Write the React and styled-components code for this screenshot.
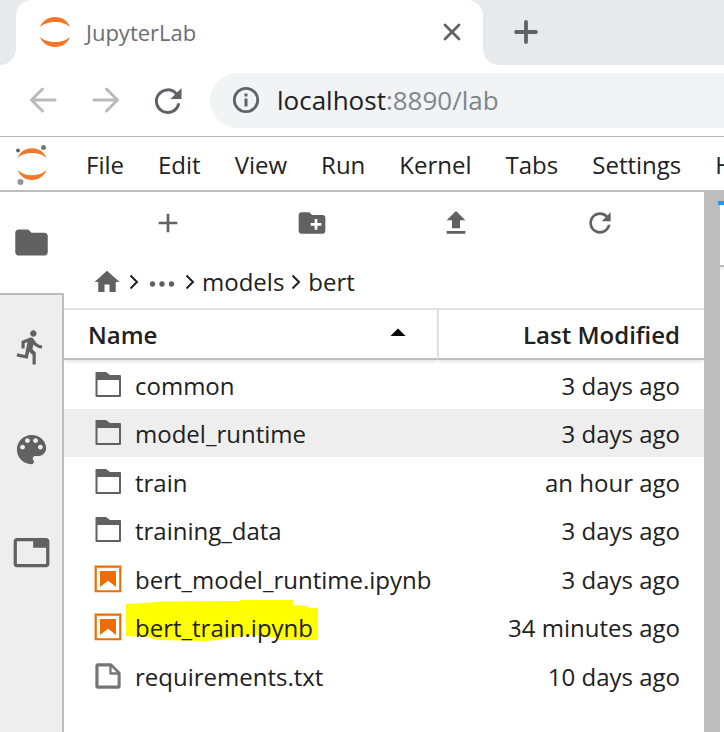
import React from "react";
import styled, { createGlobalStyle } from "styled-components";

const GlobalStyle = createGlobalStyle`
  *, *::before, *::after { box-sizing: border-box; }
  body { margin: 0; background: #fff; overflow: hidden; }
  button, input { font: inherit; color: inherit; border: 0; padding: 0; background: none; }
  a { color: inherit; text-decoration: none; }
  svg { display: block; flex: none; }
`;

const Page = styled.div`
  display: flex;
  flex-direction: column;
  height: 100vh;
  font-family: "Open Sans", "Noto Sans", sans-serif;
  font-size: 24px;
  line-height: 32px;
  color: #212121;
`;

const TabStrip = styled.header`
  display: flex;
  flex: none;
  height: 65px;
  background: #fff;
`;

const StripLead = styled.div`
  flex: none;
  width: 16px;
  background: #e6eaed;
  border-bottom-right-radius: 16px;
`;

const BrowserTab = styled.div`
  display: flex;
  align-items: center;
  flex: 0 1 467px;
  padding: 0 20px 2px 23px;
  gap: 15px;
  color: #6b6e72;
  font-size: 22px;
  background: linear-gradient(#e6eaed, #e6eaed) top / 100% 16px no-repeat;
  position: relative;
  isolation: isolate;
  &::before {
    content: "";
    position: absolute;
    inset: 0;
    z-index: -1;
    background: #fff;
    border-radius: 16px 16px 0 0;
  }
`;

const TabTitle = styled.span`
  flex: 1;
`;

const StripRest = styled.div`
  display: flex;
  align-items: center;
  flex: 1;
  padding: 0 0 2px 30px;
  background: #e6eaed;
  border-bottom-left-radius: 16px;
`;

const IconButton = styled.button`
  display: grid;
  place-items: center;
  width: ${(p) => p.$width || 26}px;
  height: 32px;
  color: ${(p) => p.$color || "#616161"};
`;

const AddressRow = styled.nav`
  display: flex;
  align-items: center;
  flex: none;
  height: 72px;
  padding-left: 27px;
  gap: 31px;
  border-bottom: 1px solid #b8b8b8;
`;

const AddressBar = styled.form`
  display: flex;
  align-items: center;
  flex: 1;
  height: 55px;
  margin-left: -4px;
  padding: 0 0 1px 22px;
  gap: 17px;
  background: #f1f3f4;
  border-radius: 28px 0 0 28px;
  font-size: 26px;
  color: #80868b;
`;

const Host = styled.span`
  color: #202124;
`;

const MenuBar = styled.nav`
  display: flex;
  align-items: center;
  flex: none;
  height: 55px;
  padding: 2px 0 0 14px;
  border-bottom: 2px solid #bdbdbd;
  overflow: hidden;
`;

const MenuLogo = styled.div`
  flex: none;
  width: 55px;
`;

const MenuItem = styled.button`
  flex: none;
  padding: 0 17px;
  && { padding: 0 17px; }
`;

const Workspace = styled.div`
  display: flex;
  flex: 1;
  min-height: 0;
`;

const SideBar = styled.aside`
  flex: none;
  width: 64px;
  background: #eee;
  display: flex;
  flex-direction: column;
  border-right: 2px solid #bdbdbd;
`;

const SideTab = styled.button`
  display: grid;
  place-items: center;
  height: 103px;
  color: #616161;
  && {
    background: ${(p) => (p.$active ? "#fff" : "none")};
    border-bottom: ${(p) => (p.$active ? "2px solid #bdbdbd" : "0")};
    margin-right: ${(p) => (p.$active ? "-2px" : "0")};
    padding-right: ${(p) => (p.$active ? "2px" : "0")};
  }
`;

const FileBrowser = styled.main`
  flex: 1;
  min-width: 0;
`;

const Toolbar = styled.div`
  display: grid;
  grid-template-columns: repeat(4, 1fr);
  justify-items: center;
  align-items: center;
  height: 61px;
  padding: 0 32px;
`;

const Crumbs = styled.nav`
  display: flex;
  align-items: center;
  height: 55px;
  padding: 2px 28px 0;
  gap: 7px;
`;

const FileTable = styled.table`
  width: 100%;
  table-layout: fixed;
  border-collapse: separate;
  border-spacing: 0;
`;

const HeadCell = styled.th`
  height: 52px;
  padding: 2px 24px 0;
  width: ${(p) => p.$width || "auto"};
  text-align: ${(p) => p.$align || "left"};
  font-weight: 600;
  border-top: 2px solid #e0e0e0;
  border-bottom: 2px solid #bdbdbd;
  box-shadow: 0 3px 3px -1px rgba(0, 0, 0, 0.1);
  & + & { border-left: 2px solid #e0e0e0; }
`;

const SortLabel = styled.button`
  display: flex;
  align-items: center;
  justify-content: space-between;
  width: 100%;
  && { padding-right: 7px; }
`;

const FileRow = styled.tr`
  height: 49px;
  background: ${(p) => (p.$hovered ? "#eee" : "transparent")};
  &:nth-child(even) { height: 48px; }
`;

const FileCell = styled.td`
  padding: ${(p) => (p.$align ? "2px 24px 0" : "0 24px 0 28px")};
  text-align: ${(p) => p.$align || "left"};
  white-space: nowrap;
`;

const FileLink = styled.a`
  display: flex;
  align-items: center;
  gap: 11px;
`;

const FileName = styled.span`
  position: relative;
  isolation: isolate;
  padding-top: 2px;
`;

const MarkerStroke = styled.svg`
  position: absolute;
  left: -9px;
  top: -10px;
  width: 192px;
  height: 41px;
  z-index: -1;
`;

const Splitter = styled.div`
  flex: none;
  width: 16px;
  background: #bdbdbd;
`;

const Dock = styled.section`
  display: flex;
  flex-direction: column;
  flex: none;
  width: 6px;
  margin-left: -2px;
  background: #bdbdbd;
  padding-top: 9px;
`;

const DockTab = styled.div`
  flex: none;
  height: 66px;
  background: linear-gradient(#fff, #fff) 2px 0 no-repeat;
  border-top: 4px solid #2196f3;
  border-bottom: 2px solid #bdbdbd;
`;

const DockBody = styled.div`
  flex: 1;
  margin-left: 2px;
  background: linear-gradient(#eee, #fff 5px);
`;

const PATHS = {
  folder: "M10 4H4c-1.1 0-1.99.9-1.99 2L2 18c0 1.1.9 2 2 2h16c1.1 0 2-.9 2-2V8c0-1.1-.9-2-2-2h-8l-2-2z",
  running: "M13.49 5.48c1.1 0 2-.9 2-2s-.9-2-2-2-2 .9-2 2 .9 2 2 2zm-3.6 13.9l1-4.4 2.1 2v6h2v-7.5l-2.1-2 .6-3c1.3 1.5 3.3 2.5 5.5 2.5v-2c-1.9 0-3.5-1-4.3-2.4l-1-1.6c-.4-.6-1-1-1.7-1-.3 0-.5.1-.8.1l-5.2 2.2v4.7h2v-3.4l1.8-.7-1.6 8.1-4.9-1-.4 2 7 1.4z",
  palette: "M12 3c-4.97 0-9 4.03-9 9s4.03 9 9 9c.83 0 1.5-.67 1.5-1.5 0-.39-.15-.74-.39-1.01-.23-.26-.38-.61-.38-.99 0-.83.67-1.5 1.5-1.5H16c2.76 0 5-2.24 5-5 0-4.42-4.03-8-9-8zm-5.5 9c-.83 0-1.5-.67-1.5-1.5S5.67 9 6.5 9 8 9.67 8 10.5 7.33 12 6.5 12zm3-4C8.67 8 8 7.33 8 6.5S8.67 5 9.5 5s1.5.67 1.5 1.5S10.33 8 9.5 8zm5 0c-.83 0-1.5-.67-1.5-1.5S13.67 5 14.5 5s1.5.67 1.5 1.5S15.33 8 14.5 8zm3 4c-.83 0-1.5-.67-1.5-1.5S16.67 9 17.5 9s1.5.67 1.5 1.5-.67 1.5-1.5 1.5z",
  tabs: "M21 3H3c-1.1 0-2 .9-2 2v14c0 1.1.9 2 2 2h18c1.1 0 2-.9 2-2V5c0-1.1-.9-2-2-2zm0 16H3V5h10v4h8v10z",
  add: "M19 13h-6v6h-2v-6H5v-2h6V5h2v6h6v2z",
  newFolder: "M20 6h-8l-2-2H4c-1.11 0-1.99.89-1.99 2L2 18c0 1.11.89 2 2 2h16c1.11 0 2-.89 2-2V8c0-1.11-.89-2-2-2zm-1 8h-3v3h-2v-3h-3v-2h3V9h2v3h3v2z",
  upload: "M9 16h6v-6h4l-7-7-7 7h4zm-4 2h14v2H5z",
  home: "M10 20v-6h4v6h5v-8h3L12 3 2 12h3v8z",
};

const Material = ({ name, size }) => (
  <svg width={size} height={size} viewBox="0 0 24 24" fill="currentColor" aria-hidden="true">
    <path d={PATHS[name]} />
  </svg>
);

const RefreshIcon = () => (
  <svg width="32" height="32" viewBox="0 0 18 18" fill="currentColor" aria-hidden="true">
    <path d="M9 13.5c-2.49 0-4.5-2.01-4.5-4.5S6.51 4.5 9 4.5c1.24 0 2.36.52 3.17 1.33L10 8h5V3l-1.76 1.76C12.15 3.68 10.66 3 9 3 5.69 3 3.01 5.69 3.01 9S5.69 15 9 15c2.97 0 5.43-2.16 5.9-5h-1.52c-.46 2-2.24 3.5-4.38 3.5z" />
  </svg>
);

const PlanetIcon = () => (
  <svg width="32" height="32" viewBox="0 0 32 32" fill="#f37726" aria-hidden="true">
    <path d="M1 11C3 5 9 1 16 1s13 4 15 10C28 8 22 6 16 6S4 8 1 11z" />
    <path d="M1 21c2 6 8 10 15 10s13-4 15-10c-3 3-9 5-15 5S4 24 1 21z" />
  </svg>
);

const JupyterLogo = () => (
  <svg width="36" height="42" viewBox="0 0 36 42" aria-hidden="true">
    <g fill="#f37726">
      <path d="M3.500 14C6 8 11 4.300 18 4.300S30 8 32.500 14C29 10.500 24 9 18 9S7 10.500 3.500 14z" />
      <path d="M3.500 26C6 32 11 36 18 36s12-4 14.500-10C29 29.500 24 31.300 18 31.300S7 29.500 3.500 26z" />
    </g>
    <circle cx="29.500" cy="3.500" r="2.500" fill="#767677" />
    <circle cx="4" cy="6.500" r="1.900" fill="#616262" />
    <circle cx="6.500" cy="38" r="3" fill="#989798" />
  </svg>
);

const Arrow = ({ d }) => (
  <svg width="28" height="28" viewBox="0 0 28 28" fill="none" stroke="currentColor" strokeWidth="3" strokeLinecap="round" strokeLinejoin="round" aria-hidden="true">
    <path d={d} />
  </svg>
);

const ReloadIcon = () => (
  <svg width="30" height="30" viewBox="0 0 30 30" aria-hidden="true">
    <path d="M25.500 18.500A11.300 11.300 0 1 1 23 7.500" fill="none" stroke="currentColor" strokeWidth="3" strokeLinecap="round" />
    <path d="M28.500 2v11h-11z" fill="currentColor" />
  </svg>
);

const InfoIcon = () => (
  <svg width="28" height="28" viewBox="0 0 28 28" aria-hidden="true">
    <circle cx="14" cy="14" r="11.700" fill="none" stroke="#5f6368" strokeWidth="2.800" />
    <path d="M12.500 7.500h3v3h-3zM12.500 12.500h3v8h-3z" fill="#5f6368" />
  </svg>
);

const Chevron = () => (
  <svg width="10" height="16" viewBox="0 0 10 16" fill="none" stroke="#212121" strokeWidth="2" aria-hidden="true">
    <path d="M1.500 1.500L8 8l-6.500 6.500" />
  </svg>
);

const FileIcon = ({ kind }) => {
  if (kind === "folder")
    return (
      <svg width="32" height="32" viewBox="0 0 32 32" aria-hidden="true">
        <path d="M4 3h10l4 3h10a1 1 0 0 1 1 1v20a1 1 0 0 1-1 1H4.500a1 1 0 0 1-1-1V4a1 1 0 0 1 .5-1zM5.500 11v15h21.500V11z" fill="#616161" fillRule="evenodd" />
      </svg>
    );
  if (kind === "notebook")
    return (
      <svg width="32" height="32" viewBox="0 0 22 22" fill="#ef6c00" aria-hidden="true">
        <path d="M18.7 3.3v15.400H3.300V3.300h15.400m1.500-1.500H1.800v18.300h18.300l.1-18.300z" />
        <path d="M16.500 16.500l-5.400-4.300-5.600 4.300v-11h11z" />
      </svg>
    );
  return (
    <svg width="32" height="32" viewBox="0 0 22 22" fill="#757575" aria-hidden="true">
      <path d="M19.300 8.200l-5.500-5.500c-.3-.3-.7-.5-1.200-.5H3.900c-.8.1-1.600.9-1.600 1.800v14.100c0 .9.7 1.600 1.600 1.600h14.200c.9 0 1.600-.7 1.600-1.600V9.400c.1-.5-.1-.9-.4-1.200zm-5.800-3.300l3.400 3.600h-3.400V4.900zm3.900 12.700H4.700c-.1 0-.2 0-.2-.2V4.700c0-.2.1-.3.2-.3h7.200v4.400s0 .8.3 1.100c.3.3 1.100.3 1.100.3h4.300v7.200s-.1.2-.2.2z" />
    </svg>
  );
};

const MENUS = ["File", "Edit", "View", "Run", "Kernel", "Tabs", "Settings", "Help"];

const FILES = [
  { name: "common", kind: "folder", modified: "3 days ago" },
  { name: "model_runtime", kind: "folder", modified: "3 days ago", hovered: true },
  { name: "train", kind: "folder", modified: "an hour ago" },
  { name: "training_data", kind: "folder", modified: "3 days ago" },
  { name: "bert_model_runtime.ipynb", kind: "notebook", modified: "3 days ago" },
  { name: "bert_train.ipynb", kind: "notebook", modified: "34 minutes ago", marked: true },
  { name: "requirements.txt", kind: "file", modified: "10 days ago" },
];

export default function App() {
  return (
    <Page>
      <GlobalStyle />
      <TabStrip>
        <StripLead />
        <BrowserTab>
          <PlanetIcon />
          <TabTitle>JupyterLab</TabTitle>
          <IconButton type="button" aria-label="Close tab" $width={22} $color="#5f6368">
            <svg width="18" height="18" viewBox="0 0 18 18" stroke="currentColor" strokeWidth="2.800" strokeLinecap="round" aria-hidden="true">
              <path d="M2 2l14 14M16 2L2 16" />
            </svg>
          </IconButton>
        </BrowserTab>
        <StripRest>
          <IconButton type="button" aria-label="New tab" $color="#5f6368">
            <svg width="24" height="24" viewBox="0 0 24 24" stroke="currentColor" strokeWidth="3.800" strokeLinecap="round" aria-hidden="true">
              <path d="M12 2v20M2 12h20" />
            </svg>
          </IconButton>
        </StripRest>
      </TabStrip>

      <AddressRow aria-label="Browser navigation">
        <IconButton type="button" aria-label="Back" $width={32} $color="#bababc">
          <Arrow d="M26 13H3M13.500 2L2.500 13l11 11" />
        </IconButton>
        <IconButton type="button" aria-label="Forward" $width={32} $color="#bababc">
          <Arrow d="M2 13h23M14.500 2l11 11-11 11" />
        </IconButton>
        <IconButton type="button" aria-label="Reload" $width={30} $color="#5f6368">
          <ReloadIcon />
        </IconButton>
        <AddressBar>
          <InfoIcon />
          <span>
            <Host>localhost</Host>:8890/lab
          </span>
        </AddressBar>
      </AddressRow>

      <MenuBar aria-label="Main menu">
        <MenuLogo>
          <JupyterLogo />
        </MenuLogo>
        {MENUS.map((label) => (
          <MenuItem type="button" key={label}>{label}</MenuItem>
        ))}
      </MenuBar>

      <Workspace>
        <SideBar>
          <SideTab type="button" aria-label="File Browser" $active><Material name="folder" size={39} /></SideTab>
          <SideTab type="button" aria-label="Running Terminals and Kernels"><Material name="running" size={38} /></SideTab>
          <SideTab type="button" aria-label="Commands"><Material name="palette" size={39} /></SideTab>
          <SideTab type="button" aria-label="Open Tabs"><Material name="tabs" size={39} /></SideTab>
        </SideBar>

        <FileBrowser>
          <Toolbar>
            <IconButton type="button" aria-label="New Launcher" $width={32}><Material name="add" size={32} /></IconButton>
            <IconButton type="button" aria-label="New Folder" $width={32}><Material name="newFolder" size={32} /></IconButton>
            <IconButton type="button" aria-label="Upload Files" $width={32}><Material name="upload" size={32} /></IconButton>
            <IconButton type="button" aria-label="Refresh File List" $width={32}><RefreshIcon /></IconButton>
          </Toolbar>
          <Crumbs aria-label="Breadcrumbs">
            <IconButton as="a" href="#home" aria-label="Home" $width={30}><Material name="home" size={30} /></IconButton>
            <Chevron />
            <IconButton as="a" href="#parents" aria-label="Parent folders" $width={32}>
              <svg width="26" height="32" viewBox="0 0 26 32" fill="currentColor" aria-hidden="true">
                <circle cx="3.500" cy="18" r="2.700" />
                <circle cx="13" cy="18" r="2.700" />
                <circle cx="22.500" cy="18" r="2.700" />
              </svg>
            </IconButton>
            <Chevron />
            <a href="#models">models</a>
            <Chevron />
            <a href="#bert">bert</a>
          </Crumbs>
          <FileTable>
            <thead>
              <tr>
                <HeadCell aria-sort="ascending">
                  <SortLabel type="button">
                    <span>Name</span>
                    <svg width="16" height="16" viewBox="0 0 16 16" aria-hidden="true">
                      <path d="M0.500 9L8 1.500l7.500 7.500z" fill="#000" />
                    </svg>
                  </SortLabel>
                </HeadCell>
                <HeadCell $width="267px" $align="right">Last Modified</HeadCell>
              </tr>
            </thead>
            <tbody>
              {FILES.map((file) => (
                <FileRow key={file.name} $hovered={file.hovered}>
                  <FileCell>
                    <FileLink href={"#" + file.name}>
                      <FileIcon kind={file.kind} />
                      <FileName>
                        {file.marked && (
                          <MarkerStroke viewBox="0 0 192 41" aria-hidden="true">
                            <path d="M0 4L18 3 36 1.500 114 1V0h53v5l14 1 1 1.500 10 1V40h-40l-1-2-22-3-22 2-14 3-14 1-46-1-12-3-22-1z" fill="#ff0" />
                          </MarkerStroke>
                        )}
                        {file.name}
                      </FileName>
                    </FileLink>
                  </FileCell>
                  <FileCell $align="right">{file.modified}</FileCell>
                </FileRow>
              ))}
            </tbody>
          </FileTable>
        </FileBrowser>

        <Splitter />
        <Dock>
          <DockTab />
          <DockBody />
        </Dock>
      </Workspace>
    </Page>
  );
}
